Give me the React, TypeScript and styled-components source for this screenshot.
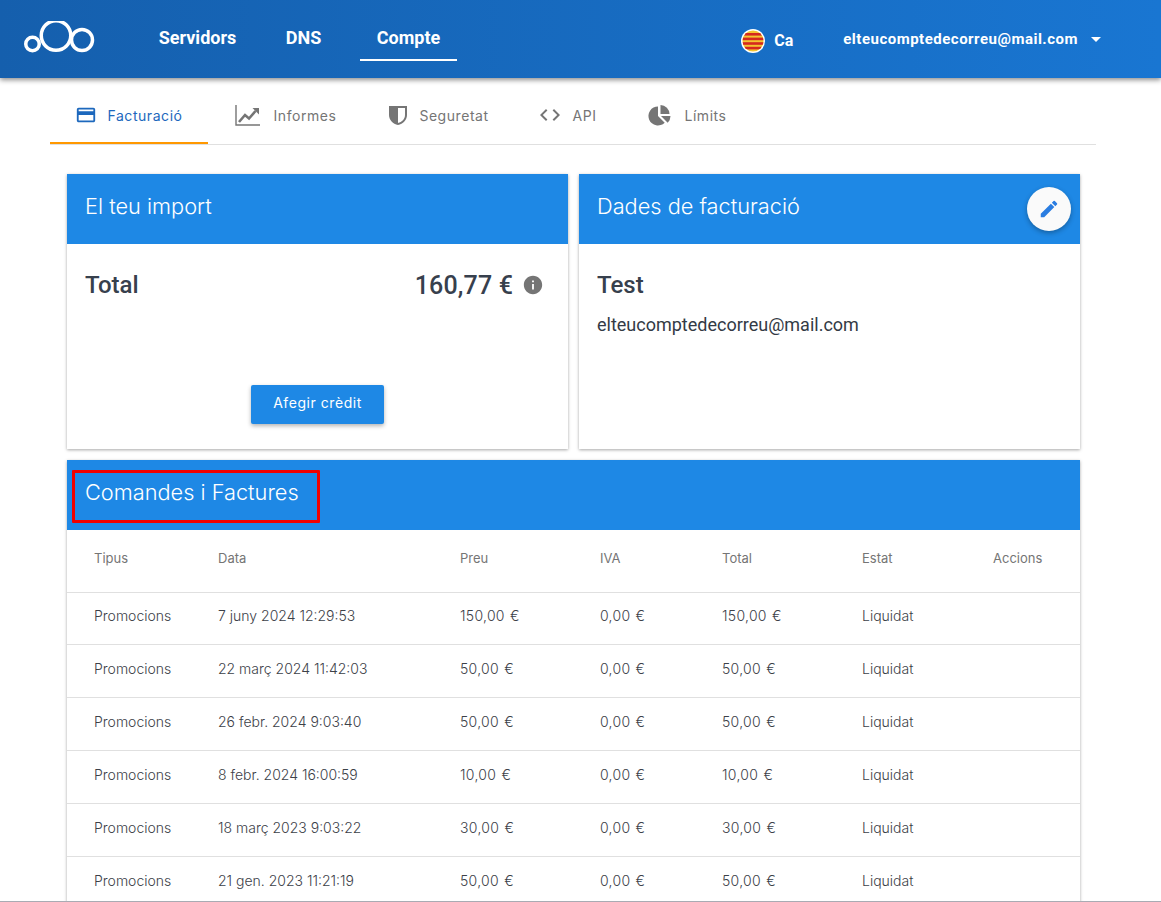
import styled, { createGlobalStyle } from "styled-components";
import {
  MdArrowDropDown,
  MdCode,
  MdCreditCard,
  MdEdit,
  MdInfo,
} from "react-icons/md";

const GlobalStyle = createGlobalStyle`
  html, body {
    margin: 0;
    padding: 0;
    background: #fff;
    overflow: hidden;
  }
  * {
    box-sizing: border-box;
  }
`;

const Page = styled.div`
  height: 902px;
  overflow: hidden;
  border-bottom: 1px solid #a9abb3;
  font-family: Roboto, "Liberation Sans", sans-serif;
  color: #37404d;
`;

const TopBar = styled.header`
  position: relative;
  z-index: 2;
  height: 78px;
  display: flex;
  align-items: center;
  padding: 0 53px 0 24px;
  background: linear-gradient(90deg, #155fad 0%, #1976d2 100%);
  box-shadow: 0 2px 5px rgba(0, 0, 0, 0.45);
  color: #fff;
`;

const Logo = styled.svg`
  width: 71px;
  height: 36px;
  margin-right: 48px;
`;

const MainNav = styled.nav`
  display: flex;
  align-items: stretch;
  height: 78px;
`;

const MainLink = styled.a<{ $active?: boolean; $width: number }>`
  width: ${(p) => p.$width}px;
  display: flex;
  align-items: center;
  justify-content: center;
  height: 61px;
  padding-top: 16px;
  font-size: 18px;
  font-weight: 700;
  margin-left: ${(p) => (p.$active ? 5 : 0)}px;
  border-bottom: 2px solid ${(p) => (p.$active ? "#fff" : "transparent")};
`;

const Lang = styled.div`
  display: flex;
  align-items: center;
  gap: 9px;
  margin-left: auto;
  font-size: 16px;
  font-weight: 700;
  padding-top: 3px;
`;

const Flag = styled.svg`
  width: 24px;
  height: 24px;
`;

const UserMenu = styled.div`
  display: flex;
  align-items: center;
  margin-left: 50px;
  font-size: 15px;
  font-weight: 700;
  letter-spacing: 0.5px;
`;

const Caret = styled(MdArrowDropDown)`
  width: 24px;
  height: 24px;
  margin-left: 6px;
`;

const Tabs = styled.nav`
  display: flex;
  margin: 10px 65px 0 50px;
  height: 57px;
  border-bottom: 1px solid #e0e0e0;
`;

const Tab = styled.a<{ $active?: boolean; $width: number; $gap: number }>`
  width: ${(p) => p.$width}px;
  height: 56px;
  display: flex;
  align-items: center;
  justify-content: center;
  gap: ${(p) => p.$gap}px;
  font-family: Inter, Roboto, sans-serif;
  font-size: 14px;
  font-weight: 400;
  letter-spacing: 0.55px;
  color: ${(p) => (p.$active ? "#1d68bd" : "#757575")};
  border-bottom: 2px solid ${(p) => (p.$active ? "#ff9800" : "transparent")};
  svg {
    flex: none;
    width: 24px;
    height: 24px;
  }
`;

const CardIcon = styled(MdCreditCard)`
  && {
    width: 22px;
    height: 22px;
  }
`;

const Content = styled.main`
  padding: 29px 81px 0 67px;
  display: flex;
  flex-direction: column;
  gap: 11px;
`;

const CardRow = styled.div`
  display: grid;
  grid-template-columns: 1fr 1fr;
  gap: 11px;
`;

const Card = styled.section`
  position: relative;
  background: #fff;
  box-shadow: 0 1px 3px rgba(0, 0, 0, 0.35);
`;

const CardHeader = styled.div`
  position: relative;
  height: 70px;
  display: flex;
  align-items: center;
  padding: 0 18px 6px;
  background: #1e88e5;
  color: #fff;
  font-family: Inter, Roboto, sans-serif;
  font-size: 21.75px;
  font-weight: 300;
`;

const Highlight = styled.div`
  position: absolute;
  left: 5px;
  top: 10px;
  width: 248px;
  height: 53px;
  border: 3px solid #f00000;
  border-radius: 1px;
`;

const EditButton = styled.button`
  position: absolute;
  top: 13px;
  right: 9px;
  width: 44px;
  height: 44px;
  padding: 0;
  border: 0;
  border-radius: 50%;
  display: flex;
  align-items: center;
  justify-content: center;
  background: #fafafa;
  color: #2a7de1;
  box-shadow: 0 2px 5px rgba(0, 0, 0, 0.3);
  svg {
    width: 22px;
    height: 22px;
  }
`;

const CardBody = styled.div`
  height: 205px;
  padding: 25px 18px 0;
  display: flex;
  flex-direction: column;
`;

const TotalRow = styled.div`
  display: flex;
  align-items: center;
  justify-content: space-between;
  padding-right: 6px;
  height: 32px;
  font-size: 24px;
  font-weight: 500;
`;

const Amount = styled.div`
  display: flex;
  align-items: center;
  gap: 9px;
  font-size: 25px;
  letter-spacing: 0.15px;
  svg {
    width: 22px;
    height: 22px;
    color: #757575;
  }
`;

const CreditButton = styled.button`
  align-self: center;
  margin-top: 84px;
  width: 133px;
  height: 39px;
  padding: 0 0 5px;
  border: 0;
  border-radius: 2px;
  background: #1e88e5;
  color: #fff;
  font-family: Inter, Roboto, sans-serif;
  font-size: 14px;
  font-weight: 400;
  letter-spacing: 0.55px;
  box-shadow: 0 2px 4px rgba(0, 0, 0, 0.3);
`;

const BillingName = styled.div`
  height: 32px;
  display: flex;
  align-items: center;
  font-size: 24px;
  font-weight: 500;
`;

const BillingMail = styled.div`
  margin-top: 13px;
  font-size: 18px;
  color: #333a45;
`;

const Table = styled.table`
  width: 100%;
  border-collapse: collapse;
  table-layout: fixed;
  font-family: Inter, Roboto, sans-serif;
  font-size: 13px;
`;

const HeadCell = styled.th`
  height: 62px;
  padding: 0 0 5px;
  text-align: left;
  font-weight: 400;
  color: #757575;
  border-bottom: 1px solid #e0e0e0;
  &:first-child {
    padding-left: 27px;
  }
`;

const Cell = styled.td`
  padding: 0 0 4px;
  font-size: 14px;
  font-weight: 300;
  color: #3c4148;
  &:first-child {
    padding-left: 27px;
  }
`;

const Row = styled.tr`
  height: 53px;
  border-bottom: 1px solid #e0e0e0;
  &:first-child {
    height: 52px;
  }
  &:first-child ${Cell} {
    padding-bottom: 5px;
  }
`;

const MoneyCell = styled(Cell)`
  letter-spacing: 0.3px;
  word-spacing: 1px;
`;

const columns = [151, 242, 140, 122, 140, 131, 87];
const heads = ["Tipus", "Data", "Preu", "IVA", "Total", "Estat", "Accions"];

const orders = [
  { date: "7 juny 2024 12:29:53", amount: "150,00 €" },
  { date: "22 març 2024 11:42:03", amount: "50,00 €" },
  { date: "26 febr. 2024 9:03:40", amount: "50,00 €" },
  { date: "8 febr. 2024 16:00:59", amount: "10,00 €" },
  { date: "18 març 2023 9:03:22", amount: "30,00 €" },
  { date: "21 gen. 2023 11:21:19", amount: "50,00 €" },
];

function ChartIcon() {
  return (
    <svg viewBox="0 0 26 24" fill="none" style={{ width: 26 }}>
      <path d="M1 2v20h24" stroke="#757575" strokeWidth="1.4" />
      <path d="M4 19l6-7 4 3.5L20.5 8" stroke="#757575" strokeWidth="2.6" />
      <path d="M17.5 5H24v6.5z" fill="#757575" />
    </svg>
  );
}

function ShieldIcon() {
  return (
    <svg viewBox="0 0 24 24" fill="#757575">
      <path
        fillRule="evenodd"
        d="M3 3h18v9c0 5-4 9-9 10-5-1-9-5-9-10zM12 5v15c4-1 7-4 7-8V5z"
      />
    </svg>
  );
}

function PieIcon() {
  return (
    <svg viewBox="0 0 24 24" fill="#757575">
      <path d="M10 3.5A9.5 9.5 0 1 0 16.7 19.7L10 13z" />
      <path d="M12.5 2v9h9A9 9 0 0 0 12.5 2z" />
      <path d="M13 13h9.5a9.5 9.5 0 0 1-2.8 6.7z" />
    </svg>
  );
}

export default function App() {
  return (
    <Page>
      <GlobalStyle />
      <TopBar>
        <Logo viewBox="0 0 71 36" fill="none" stroke="#fff" strokeWidth="3.5">
          <circle cx="8.5" cy="23" r="6.75" />
          <circle cx="32" cy="14.5" r="14.75" />
          <circle cx="58" cy="19" r="10.5" />
        </Logo>
        <MainNav>
          <MainLink $width={109}>Servidors</MainLink>
          <MainLink $width={103}>DNS</MainLink>
          <MainLink $width={97} $active>
            Compte
          </MainLink>
        </MainNav>
        <Lang>
          <Flag viewBox="0 0 24 24">
            <defs>
              <clipPath id="flag-clip">
                <circle cx="12" cy="12" r="10.5" />
              </clipPath>
            </defs>
            <circle cx="12" cy="12" r="12" fill="#fff" />
            <g clipPath="url(#flag-clip)">
              <rect width="24" height="24" fill="#f4c430" />
              <rect y="4" width="24" height="2.6" fill="#d5281f" />
              <rect y="8.6" width="24" height="2.6" fill="#d5281f" />
              <rect y="13.2" width="24" height="2.6" fill="#d5281f" />
              <rect y="17.8" width="24" height="2.6" fill="#d5281f" />
            </g>
          </Flag>
          Ca
        </Lang>
        <UserMenu>
          elteucomptedecorreu@mail.com
          <Caret />
        </UserMenu>
      </TopBar>

      <Tabs>
        <Tab $width={158} $gap={10} $active>
          <CardIcon />
          Facturació
        </Tab>
        <Tab $width={155} $gap={13}>
          <ChartIcon />
          Informes
        </Tab>
        <Tab $width={149} $gap={9}>
          <ShieldIcon />
          Seguretat
        </Tab>
        <Tab $width={111} $gap={10}>
          <MdCode />
          API
        </Tab>
        <Tab $width={129} $gap={12}>
          <PieIcon />
          Límits
        </Tab>
      </Tabs>

      <Content>
        <CardRow>
          <Card>
            <CardHeader>El teu import</CardHeader>
            <CardBody>
              <TotalRow>
                Total
                <Amount>
                  160,77 €
                  <MdInfo />
                </Amount>
              </TotalRow>
              <CreditButton>Afegir crèdit</CreditButton>
            </CardBody>
          </Card>
          <Card>
            <CardHeader>
              Dades de facturació
              <EditButton>
                <MdEdit />
              </EditButton>
            </CardHeader>
            <CardBody>
              <BillingName>Test</BillingName>
              <BillingMail>elteucomptedecorreu@mail.com</BillingMail>
            </CardBody>
          </Card>
        </CardRow>
        <Card>
          <CardHeader>
            Comandes i Factures
            <Highlight />
          </CardHeader>
          <Table>
            <colgroup>
              {columns.map((width, i) => (
                <col key={i} style={{ width }} />
              ))}
            </colgroup>
            <thead>
              <tr>
                {heads.map((head) => (
                  <HeadCell key={head}>{head}</HeadCell>
                ))}
              </tr>
            </thead>
            <tbody>
              {orders.map((order) => (
                <Row key={order.date}>
                  <Cell>Promocions</Cell>
                  <Cell>{order.date}</Cell>
                  <MoneyCell>{order.amount}</MoneyCell>
                  <MoneyCell>0,00 €</MoneyCell>
                  <MoneyCell>{order.amount}</MoneyCell>
                  <Cell>Liquidat</Cell>
                  <Cell />
                </Row>
              ))}
            </tbody>
          </Table>
        </Card>
      </Content>
    </Page>
  );
}
